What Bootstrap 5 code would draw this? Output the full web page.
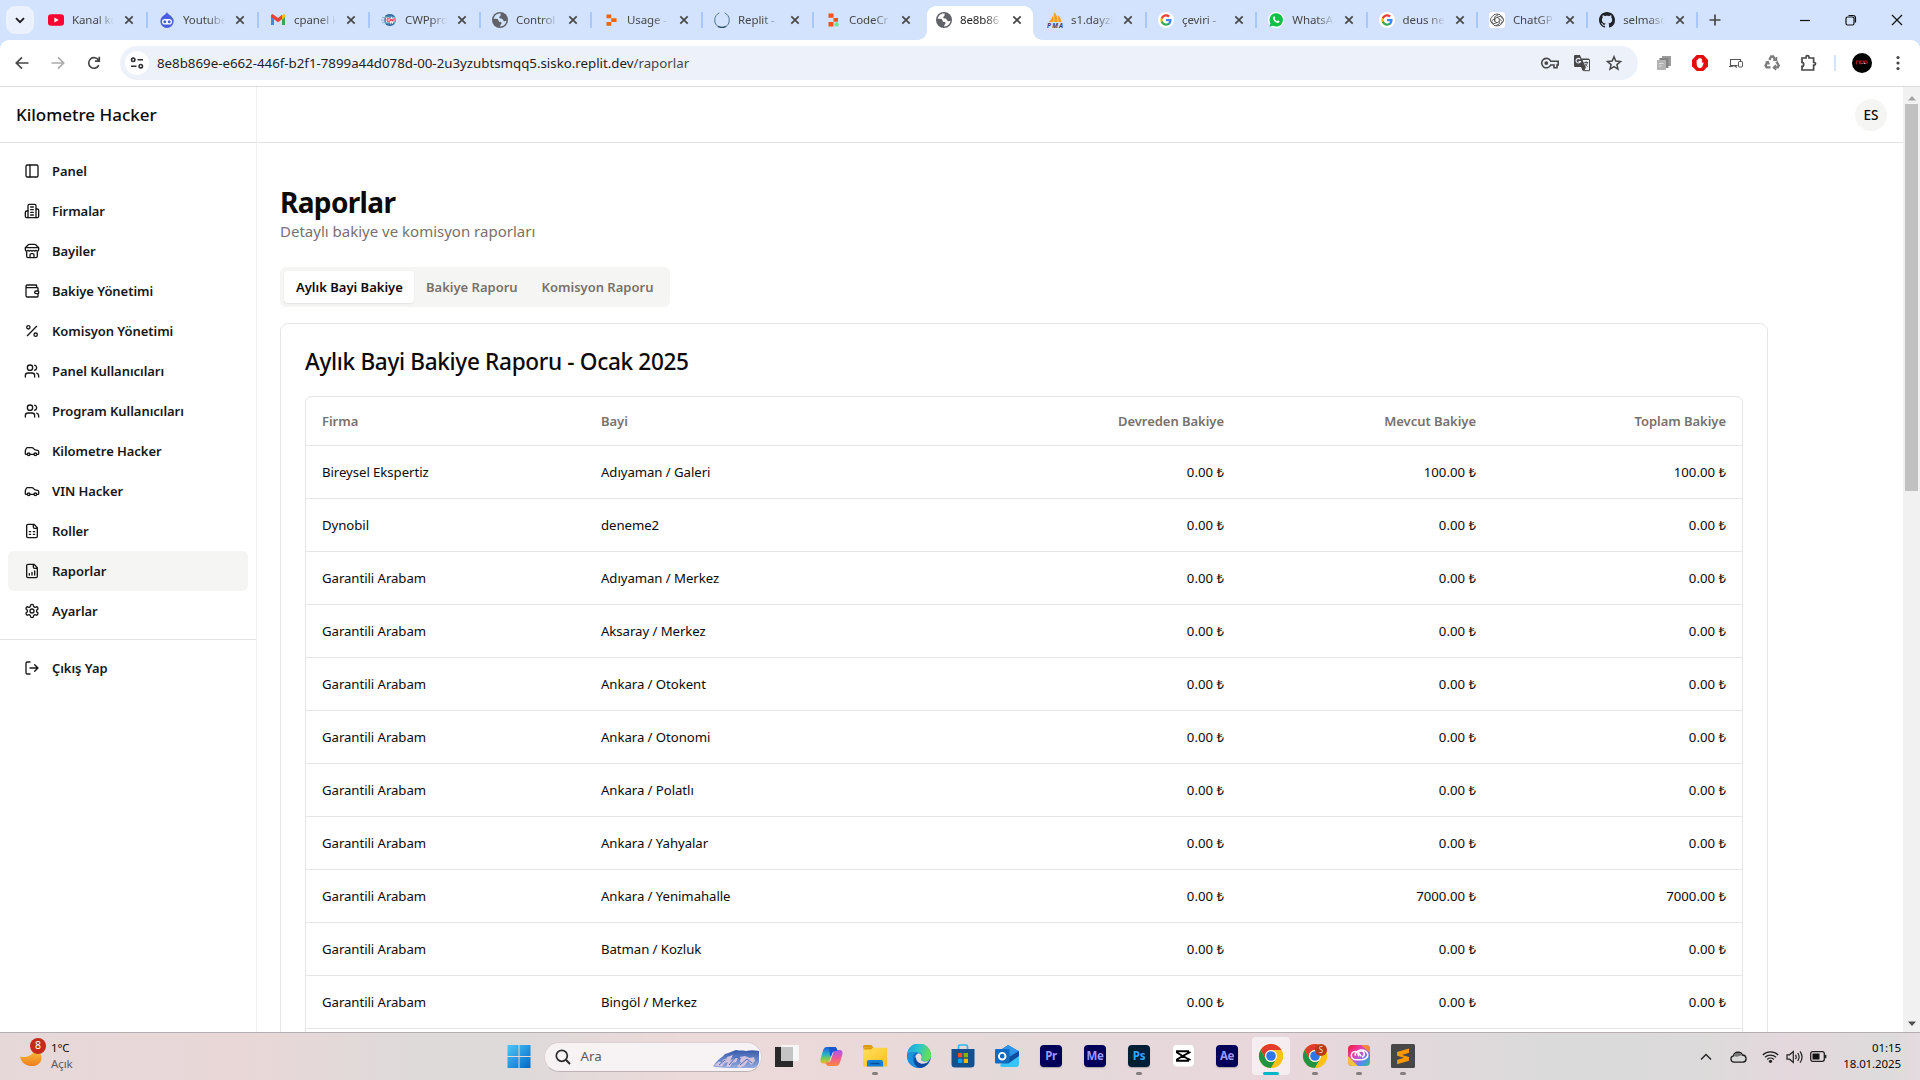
<!DOCTYPE html>
<html lang="tr">
<head>
<meta charset="utf-8">
<meta name="viewport" content="width=device-width, initial-scale=1">
<title>Kilometre Hacker - Raporlar</title>
<link href="https://cdn.jsdelivr.net/npm/bootstrap@5.3.0/dist/css/bootstrap.min.css" rel="stylesheet">
<style>
  body{font-family:"Noto Sans","Open Sans",sans-serif;font-size:14px;color:#0c0a09;background:#fff}
  svg{display:block;flex:none}
  .screen{width:1920px;height:1080px}
  /* browser tab strip */
  .strip{height:40px;background:#d3e3fd;flex:none;padding-left:6px}
  .tab-search{width:28px;height:28px;border-radius:9px;background:#ebf1fd;margin-right:3px}
  .btab{height:28px;width:111px;padding-left:11px;position:relative;font-size:11.5px;letter-spacing:-.1px;color:#474747;flex:none}
  .btab.w{width:110.3px}
  .btab .cap{width:42px;margin-left:8px;white-space:nowrap;overflow:hidden;-webkit-mask-image:linear-gradient(90deg,#000 60%,transparent);mask-image:linear-gradient(90deg,#000 60%,transparent)}
  .btab .fav{width:16px;height:16px;color:#d3e3fd}
  .btab .cls{margin-left:10px}
  .btab::after{content:"";position:absolute;right:0;top:6px;height:16px;width:2px;background:#a8c7fa}
  .btab.last-before::after,.btab.current::after{display:none}
  .btab.current{color:#1f1f1f;height:34px;margin-top:6px;align-self:flex-start;padding-bottom:6px;z-index:1}
  .btab.current .fav{color:#fff}
  .btab.current::before{content:"";position:absolute;z-index:-1;left:2px;right:3px;top:0;bottom:0;background:#fff;border-radius:9px 9px 0 0}
  .foot{position:absolute;bottom:0;width:9px;height:9px}
  .foot.l{left:-7px;background:radial-gradient(circle at 0 0,transparent 8.5px,#fff 9px)}
  .foot.r{right:-6px;background:radial-gradient(circle at 100% 0,transparent 8.5px,#fff 9px)}
  .plus{margin-left:11px}
  /* toolbar */
  .tools-wrap{background:#d3e3fd;flex:none}
  .tools{height:47px;background:#fff;border-radius:9px 9px 0 0;border-bottom:1px solid #dcdcdc;padding:6px 0 6px 4px}
  .tbtn{width:36px;height:34px}
  .omni{width:1518px;height:34px;border-radius:17px;background:#edf1fa;margin-left:8px;padding:0 12px 0 5px}
  .site{width:24px;height:24px;border-radius:50%;background:#fff}
  .url{font-size:13.3px;letter-spacing:-.01px;margin-left:8px;padding-top:1px;color:#1f1f1f}
  .url span{color:#474747}
  .ext{width:36px}
  /* app */
  .view{height:945px;overflow:hidden;flex:none}
  .side{width:257px;border-right:1px solid #f0f0ef;flex:none}
  .bar{height:56px;border-bottom:1px solid #e2e2e1;flex:none}
  .brand{font-size:17px;font-weight:500;letter-spacing:-.02px;padding:1px 0 0 16px}
  .side .nav{padding:8px}
  .side .nav-link{height:40px;padding:0 16px;gap:12px;color:#171717;font-weight:600;font-size:13px;letter-spacing:-.05px;border-radius:6px;width:240px}
  .side .nav-link span{padding-top:2px}
  .side .nav-link svg{fill:none;stroke:currentColor;stroke-width:2;stroke-linecap:round;stroke-linejoin:round}
  .side .nav-link.active{background:#f5f5f4}
  .side .split{border-top:1px solid #e2e2e1}
  .avatar{width:32px;height:32px;border-radius:50%;background:#f5f5f4;font-size:13.5px;font-weight:500;margin-right:16px;padding-top:1px}
  .page-body{width:1488px;margin-left:23px;padding-top:41px}
  .page-body h1{font-size:28px;font-weight:700;letter-spacing:-.65px;line-height:36px;margin:0}
  .sub{font-size:15px;letter-spacing:0;line-height:24px;color:#78716c;margin:-1px 0 24px}
  .seg{background:#f5f5f4;border-radius:6px;padding:4px;height:40px;display:inline-flex}
  .seg button{border:0;background:transparent;height:32px;padding:2px 12px 0;font-size:13px;font-weight:600;color:#78716c;border-radius:4px;width:130px;white-space:nowrap}
  .seg button.active{background:#fff;color:#0c0a09;box-shadow:0 1px 2px rgba(0,0,0,.07)}
  .seg button:nth-child(2){width:115px}.seg button:nth-child(3){width:137px}
  .panel{border:1px solid #e5e5e4;border-radius:8px;padding:24px;margin-top:16px;height:900px}
  .panel h2{font-size:22.6px;font-weight:500;letter-spacing:-.34px;line-height:28px;margin:0 0 20px}
  .frame{border:1px solid #e5e5e4;border-radius:6px}
  .frame table{margin:0;table-layout:fixed;width:100%;--bs-table-bg:transparent}
  .frame th,.frame td{border-bottom:1px solid #e5e5e4;padding:2px 16px 0!important;vertical-align:middle;white-space:nowrap}
  .frame th{height:48px;color:#78716c;font-weight:600;font-size:13px;letter-spacing:-.04px}
  .frame td{height:53px;padding-top:3px!important;font-size:13.2px;letter-spacing:-.06px;color:#0c0a09}
  .frame td.text-end{letter-spacing:0}
  .sbar{width:17px;background:#f1f1f1;flex:none;padding:5px 0 6px}
  .thumb{width:13px;height:387px;background:#c1c1c1;margin-top:3px}
  /* taskbar */
  .task{height:48px;border-top:1px solid #b5aeb0;background:linear-gradient(90deg,#e6d8d9 0,#e9d7d7 240px,#dedada 420px,#dfdada 530px,#ecd9d9 680px,#ebd9d9 860px,#e4d9d9 1000px,#e8d7dc 1280px,#dadada 1560px,#dcdada 1700px,#e4d8dd 1790px,#dddbdb 1890px,#e5dadf 1920px);flex:none}
  .weather{width:506.5px;padding-left:20px}
  .count{position:absolute;left:10px;top:-1px;width:16px;height:16px;border-radius:50%;background:#c42b1c;color:#fff;font-size:10.5px}
  .clk{font-size:11.5px;letter-spacing:-.1px;line-height:16px;padding-bottom:2px}
  .find{width:218px;height:30px;border-radius:15px;background:#f7f3f4;border:1px solid #ddd0d1;border-bottom-color:#bdb2b3;margin:0 3.5px 0 13px;padding:0 1px 0 10px;overflow:hidden;color:#5c5858;font-size:13.3px}
  .app{width:44px;height:46px;position:relative;margin-bottom:1px}
  .app::after{content:"";position:absolute;bottom:4px;left:19px;width:6px;height:3px;border-radius:2px;background:transparent}
  .app.run::after{background:#857d7f}
  .app.on::before{content:"";position:absolute;left:3px;top:4px;width:38px;height:38px;border-radius:4px;background:#f5edf0}
  .app.on::after{background:#00b7c3;width:16px;left:14px}
  .app svg,.app .sq{position:relative}
  .sq{width:22px;height:22px;border-radius:4px;background:#00005b;color:#9999ff;font-size:11.5px;font-weight:700;letter-spacing:-.3px;box-shadow:0 1px 1px rgba(0,0,0,.25)}
  .sq.ps{background:#001e36;color:#31a8ff}
</style>
<script src="https://cdn.jsdelivr.net/npm/bootstrap@5.3.0/dist/js/bootstrap.bundle.min.js"></script>
</head>
<body class="overflow-hidden">
<svg width="0" height="0" class="position-absolute">
  <defs>
    <symbol id="x" viewBox="0 0 10 10"><path d="M1.3 1.3l7.4 7.4M8.7 1.3L1.3 8.7" stroke="#474747" stroke-width="1.7" fill="none"/></symbol>
    <symbol id="globe" viewBox="0 0 16 16"><circle cx="8" cy="8" r="8" fill="#5f6368"/><path d="M8.600 1.600C5 1.300 2.200 3.600 1.700 6.800c1.400-.2 3.600-.2 4.400.6.700.8.2 2 1.200 2.400 1 .3 2.400.2 2.300 1.400-.1 1.100-1.400 1.200-1.500 3.200 3.300.1 6-2.300 6.300-5.600-.9.500-2 .600-2.800.1-.9-.6-.5-1.700-1.500-2.100-1.100-.4-2.500.1-2.800-1-.3-1.500 1.900-1.300 1.300-4.200z" fill="currentColor"/></symbol>
    <symbol id="goog" viewBox="0 0 24 24"><circle cx="12" cy="12" r="12" fill="#fff"/><g transform="translate(2.6 2.6) scale(.785)"><path fill="#4285f4" d="M22.600 12.200c0-.8-.1-1.500-.2-2.200H12v4.300h5.900c-.3 1.400-1 2.500-2.200 3.300v2.800h3.600c2.100-1.900 3.300-4.700 3.300-8.200z"/><path fill="#34a853" d="M12 23c3 0 5.500-1 7.300-2.700l-3.600-2.800c-1 .7-2.300 1.100-3.700 1.100-2.900 0-5.300-1.900-6.200-4.500H2.200v2.800C4 20.500 7.700 23 12 23z"/><path fill="#fbbc05" d="M5.800 14.100c-.2-.7-.3-1.400-.3-2.100s.1-1.400.3-2.100V7.100H2.200a11 11 0 0 0 0 9.800z"/><path fill="#ea4335" d="M12 5.400c1.600 0 3.100.6 4.200 1.600l3.200-3.200C17.500 2.100 15 1 12 1 7.700 1 4 3.500 2.200 7.100l3.600 2.800C6.700 7.300 9.100 5.400 12 5.400z"/></g></symbol>
    <symbol id="chrome" viewBox="0 0 24 24"><circle cx="12" cy="12" r="12" fill="#fbc116"/><path d="M1.600 6A12 12 0 0 1 22.400 6H12a6 6 0 0 0-5.300 8.800z" fill="#e33b2e"/><path d="M1.600 6a12 12 0 0 0 10.400 18l5.200-9a6 6 0 0 1-10.400 0z" fill="#229342"/><path d="M12 6h10.400a12 12 0 0 1-10.400 18l5.200-9A6 6 0 0 0 12 6z" fill="#fbc116"/><circle cx="12" cy="12" r="6" fill="#fff"/><circle cx="12" cy="12" r="4.800" fill="#2f76ea"/></symbol>
    <symbol id="i-panel" viewBox="0 0 24 24"><rect x="3" y="3" width="18" height="18" rx="2"/><path d="M9 3v18"/></symbol>
    <symbol id="i-building" viewBox="0 0 24 24"><path d="M6 22V4a2 2 0 0 1 2-2h8a2 2 0 0 1 2 2v18Z"/><path d="M6 12H4a2 2 0 0 0-2 2v6a2 2 0 0 0 2 2h2M18 9h2a2 2 0 0 1 2 2v9a2 2 0 0 1-2 2h-2M10 6h4M10 10h4M10 14h4M10 18h4"/></symbol>
    <symbol id="i-store" viewBox="0 0 24 24"><path d="m2 7 4.410-4.410A2 2 0 0 1 7.830 2h8.340a2 2 0 0 1 1.420.590L22 7M4 12v8a2 2 0 0 0 2 2h12a2 2 0 0 0 2-2v-8M15 22v-4a2 2 0 0 0-2-2h-2a2 2 0 0 0-2 2v4M2 7h20M22 7v3a2 2 0 0 1-2 2 2.700 2.700 0 0 1-1.590-.630.700.700 0 0 0-.820 0A2.700 2.700 0 0 1 16 12a2.700 2.700 0 0 1-1.590-.630.700.700 0 0 0-.820 0A2.700 2.700 0 0 1 12 12a2.700 2.700 0 0 1-1.590-.630.700.700 0 0 0-.820 0A2.700 2.700 0 0 1 8 12a2.700 2.700 0 0 1-1.590-.630.700.700 0 0 0-.820 0A2.700 2.700 0 0 1 4 12a2 2 0 0 1-2-2V7"/></symbol>
    <symbol id="i-wallet" viewBox="0 0 24 24"><path d="M19 7V4a1 1 0 0 0-1-1H5a2 2 0 0 0 0 4h15a1 1 0 0 1 1 1v4h-3a2 2 0 0 0 0 4h3a1 1 0 0 0 1-1v-2a1 1 0 0 0-1-1M3 5v14a2 2 0 0 0 2 2h15a1 1 0 0 0 1-1v-4"/></symbol>
    <symbol id="i-percent" viewBox="0 0 24 24"><path d="M19 5 5 19"/><circle cx="6.500" cy="6.500" r="2.500"/><circle cx="17.500" cy="17.500" r="2.500"/></symbol>
    <symbol id="i-users" viewBox="0 0 24 24"><path d="M16 21v-2a4 4 0 0 0-4-4H6a4 4 0 0 0-4 4v2M22 21v-2a4 4 0 0 0-3-3.870M16 3.130a4 4 0 0 1 0 7.750"/><circle cx="9" cy="7" r="4"/></symbol>
    <symbol id="i-car" viewBox="0 0 24 24"><path d="M19 17h2c.6 0 1-.4 1-1v-3c0-.9-.7-1.700-1.500-1.900C18.700 10.600 16 10 16 10s-1.300-1.400-2.200-2.300c-.5-.4-1.100-.7-1.800-.7H5c-.6 0-1.100.4-1.400.9l-1.400 2.900A3.700 3.700 0 0 0 2 12v4c0 .6.4 1 1 1h2M9 17h6"/><circle cx="7" cy="17" r="2"/><circle cx="17" cy="17" r="2"/></symbol>
    <symbol id="i-sheet" viewBox="0 0 24 24"><path d="M15 2H6a2 2 0 0 0-2 2v16a2 2 0 0 0 2 2h12a2 2 0 0 0 2-2V7ZM14 2v4a2 2 0 0 0 2 2h4M8 13h2M14 13h2M8 17h2M14 17h2"/></symbol>
    <symbol id="i-chart" viewBox="0 0 24 24"><path d="M15 2H6a2 2 0 0 0-2 2v16a2 2 0 0 0 2 2h12a2 2 0 0 0 2-2V7ZM14 2v4a2 2 0 0 0 2 2h4M8 18v-2M12 18v-4M16 18v-6"/></symbol>
    <symbol id="i-gear" viewBox="0 0 24 24"><path d="M12.220 2h-.440a2 2 0 0 0-2 2v.180a2 2 0 0 1-1 1.730l-.430.250a2 2 0 0 1-2 0l-.150-.080a2 2 0 0 0-2.730.730l-.220.380a2 2 0 0 0 .730 2.730l.150.100a2 2 0 0 1 1 1.720v.510a2 2 0 0 1-1 1.740l-.150.090a2 2 0 0 0-.730 2.730l.220.380a2 2 0 0 0 2.730.730l.150-.080a2 2 0 0 1 2 0l.430.250a2 2 0 0 1 1 1.730V20a2 2 0 0 0 2 2h.440a2 2 0 0 0 2-2v-.180a2 2 0 0 1 1-1.730l.430-.250a2 2 0 0 1 2 0l.150.080a2 2 0 0 0 2.730-.730l.220-.390a2 2 0 0 0-.730-2.730l-.150-.080a2 2 0 0 1-1-1.740v-.500a2 2 0 0 1 1-1.740l.150-.090a2 2 0 0 0 .730-2.730l-.220-.380a2 2 0 0 0-2.730-.730l-.150.080a2 2 0 0 1-2 0l-.430-.250a2 2 0 0 1-1-1.730V4a2 2 0 0 0-2-2z"/><circle cx="12" cy="12" r="3"/></symbol>
    <symbol id="i-out" viewBox="0 0 24 24"><path d="M9 21H5a2 2 0 0 1-2-2V5a2 2 0 0 1 2-2h4M16 17l5-5-5-5M21 12H9"/></symbol>
    <linearGradient id="gw" x1="0" y1="0" x2="1" y2="1"><stop offset="0" stop-color="#4cc8fb"/><stop offset="1" stop-color="#0067c5"/></linearGradient>
    <linearGradient id="gm" x1="0" y1="0" x2="0" y2="1"><stop offset="0" stop-color="#f7c23c"/><stop offset="1" stop-color="#ee7d1c"/></linearGradient>
    <linearGradient id="gf" x1="0" y1="0" x2="1" y2="1"><stop offset="0" stop-color="#ffdf5c"/><stop offset="1" stop-color="#fcbf22"/></linearGradient>
    <linearGradient id="ge" x1="0" y1="0" x2="1" y2=".3"><stop offset="0" stop-color="#1b9de2"/><stop offset=".5" stop-color="#2bc3d2"/><stop offset="1" stop-color="#63de55"/></linearGradient>
    <linearGradient id="gc1" x1="0" y1="0" x2="0" y2="1"><stop offset="0" stop-color="#1b5fd8"/><stop offset=".45" stop-color="#2bb1c9"/><stop offset=".75" stop-color="#8ccb4a"/><stop offset="1" stop-color="#f3b431"/></linearGradient>
    <linearGradient id="gc2" x1="0" y1="0" x2="0" y2="1"><stop offset="0" stop-color="#a45bf0"/><stop offset=".5" stop-color="#ee5a96"/><stop offset="1" stop-color="#fb8a3c"/></linearGradient>
    <linearGradient id="gcc" x1="0" y1="0" x2="1" y2="1"><stop offset="0" stop-color="#e8202f"/><stop offset=".3" stop-color="#f0379b"/><stop offset=".55" stop-color="#b85bd4"/><stop offset=".75" stop-color="#4d8ef0"/><stop offset="1" stop-color="#2fc97b"/></linearGradient>
    <linearGradient id="gh" x1="0" y1="0" x2="0" y2="1"><stop offset="0" stop-color="#3559ac"/><stop offset="1" stop-color="#93aade"/></linearGradient>
  </defs>
</svg>

<div class="screen d-flex flex-column">
  <!-- tab strip -->
  <div class="strip d-flex align-items-center">
    <div class="tab-search d-flex align-items-center justify-content-center"><svg width="10" height="7" viewBox="0 0 10 7"><path d="M1 1.200l4 4 4-4" stroke="#1f1f1f" stroke-width="1.900" fill="none"/></svg></div>
    <div class="btab d-flex align-items-center"><svg class="fav" viewBox="0 0 16 16"><rect y="2.300" width="16" height="11.400" rx="3" fill="#ff0033"/><path d="M6.400 5.500v5L10.700 8z" fill="#fff"/></svg><div class="cap">Kanal ko</div><svg class="cls" width="10" height="10"><use href="#x"/></svg></div>
    <div class="btab d-flex align-items-center"><svg class="fav" viewBox="0 0 16 16"><path d="M8 0c.6 2 2.200 2.400 4.200 4.200A6.700 6.700 0 0 1 14.600 9.300C14.600 13 11.600 16 8 16S1.400 13 1.400 9.300c0-2 .9-3.800 2.400-5.100C5.400 2.700 7.400 2 8 0z" fill="#4a5ee0"/><rect x="3" y="7" width="10" height="5.600" rx="2.800" fill="#fff"/><circle cx="5.800" cy="9.800" r="1.500" fill="#4a5ee0"/><circle cx="10.200" cy="9.800" r="1.500" fill="#4a5ee0"/></svg><div class="cap">Youtube</div><svg class="cls" width="10" height="10"><use href="#x"/></svg></div>
    <div class="btab d-flex align-items-center"><svg class="fav" viewBox="0 0 16 16"><path d="M1 3.500v9.500h3V7.200z" fill="#4285f4"/><path d="M15 3.500v9.500h-3V7.200z" fill="#34a853"/><path d="M12 3.600v4L15.500 5V3.800c0-1.400-1.600-2-2.700-1.200z" fill="#fbbc04"/><path d="M1 3.800C1 2.300 2.600 1.900 3.600 2.700L8 6l4-3.200v4.500L8 10.300 3.600 7 1 5z" fill="#ea4335"/></svg><div class="cap">cpanel k</div><svg class="cls" width="10" height="10"><use href="#x"/></svg></div>
    <div class="btab d-flex align-items-center"><svg class="fav" viewBox="0 0 16 16"><circle cx="9" cy="8" r="6" fill="#4f87b8"/><path d="M1 5.500h13M0 8.200h15M1 10.700h13" stroke="#7fa7d0" stroke-width=".8"/><path d="M4.500 3.800c3-1.600 7-1.300 9 .8M5 12.200c3 1.600 6 1.300 8-.6" stroke="#285d94" fill="none"/><path d="M8 6.800H6v2.400h2M9 6.500l.8 2.700.8-2 .8 2 .8-2.700M13 9.500V6.800h1.600" stroke="#fff" stroke-width="2" fill="none"/><path d="M8 6.800H6v2.400h2M9 6.500l.8 2.700.8-2 .8 2 .8-2.700M13 9.500V6.800h1.600" stroke="#d43b45" stroke-width="1" fill="none"/></svg><div class="cap">CWPpro</div><svg class="cls" width="10" height="10"><use href="#x"/></svg></div>
    <div class="btab d-flex align-items-center"><svg class="fav"><use href="#globe"/></svg><div class="cap">Control</div><svg class="cls" width="10" height="10"><use href="#x"/></svg></div>
    <div class="btab d-flex align-items-center"><svg class="fav" viewBox="0 0 16 16"><path d="M3.500 2.500h4.700v3.800H3.500zM8.200 6.300h5.300v3.600H8.200zM3.500 9.900h4.700v3.800H3.500z" fill="#f26207"/></svg><div class="cap">Usage -</div><svg class="cls" width="10" height="10"><use href="#x"/></svg></div>
    <div class="btab d-flex align-items-center"><svg class="fav" viewBox="0 0 16 16"><path d="M5.300.9A8 8 0 0 0 4.700 15M10.700.9A8 8 0 0 1 11.300 15" stroke="#51718f" stroke-width="1" fill="none"/><path d="M4.200 14.400Q8 16.500 11.800 14.400" stroke="#2f5069" stroke-width="1.500" fill="none"/></svg><div class="cap">Replit -</div><svg class="cls" width="10" height="10"><use href="#x"/></svg></div>
    <div class="btab last-before d-flex align-items-center"><svg class="fav" viewBox="0 0 16 16"><path d="M3.500 1.500h5v4.300h-5zM8.500 6h4.500v3.700H8.500zM3.500 10h5v4.500h-5z" fill="#f2541b"/><circle cx="11.600" cy="12.400" r="2.200" fill="#6de58a"/></svg><div class="cap">CodeCr</div><svg class="cls" width="10" height="10"><use href="#x"/></svg></div>
    <div class="btab current d-flex align-items-center"><i class="foot l"></i><i class="foot r"></i><svg class="fav"><use href="#globe"/></svg><div class="cap">8e8b86</div><svg class="cls" width="10" height="10"><use href="#x"/></svg></div>
    <div class="btab d-flex align-items-center"><svg class="fav" viewBox="0 0 16 16"><path d="M6.500 1v9H1.800C4 8 6 5 6.500 1zM7.200 0c2.300 2.200 3.600 5.800 3.500 10H7.200zM11 3c2 2 3.200 4.500 3.400 7h-3z" fill="#f89c1c"/><text x="0" y="15.800" font-size="6.500" font-weight="700" font-style="italic" fill="#3b3f6e" textLength="16">PMA</text></svg><div class="cap">s1.dayzi</div><svg class="cls" width="10" height="10"><use href="#x"/></svg></div>
    <div class="btab w d-flex align-items-center"><svg class="fav"><use href="#goog"/></svg><div class="cap">çeviri -</div><svg class="cls" width="10" height="10"><use href="#x"/></svg></div>
    <div class="btab w d-flex align-items-center"><svg class="fav" viewBox="0 0 16 16"><circle cx="8" cy="8" r="8" fill="#fff"/><path d="M1.500 14.600l.9-3.400a6.700 6.700 0 1 1 2.500 2.500z" fill="#0fc144"/><path d="M5.600 4.600c.5-.5 1-.3 1.200.3l.4 1c.1.300-.6.900-.5 1.100.5 1 1.300 1.700 2.300 2.100.3.100.8-.8 1.100-.7l1.300.7c.3.300 0 1.400-.7 1.700-1.500.6-3.600-.7-4.800-2.300C4.700 7 4.500 5.600 5.600 4.600z" fill="#fff"/></svg><div class="cap">WhatsA</div><svg class="cls" width="10" height="10"><use href="#x"/></svg></div>
    <div class="btab w d-flex align-items-center"><svg class="fav"><use href="#goog"/></svg><div class="cap">deus ne</div><svg class="cls" width="10" height="10"><use href="#x"/></svg></div>
    <div class="btab w d-flex align-items-center"><svg class="fav" viewBox="0 0 16 16"><rect width="16" height="16" rx="3" fill="#fff"/><g fill="none" stroke="#3c3c3c" stroke-width=".8"><path d="M8 2a6 6 0 0 1 5.200 3 4 4 0 0 1 0 6A6 6 0 0 1 8 14a6 6 0 0 1-5.200-3 4 4 0 0 1 0-6A6 6 0 0 1 8 2z"/><path d="M8 5.300l2.300 1.400v2.700L8 10.700 5.700 9.400V6.700zM5.700 9.400V4.800L9.500 2.600M8 5.300l4-1.200 1.500 3M10.300 6.700l3 3-1.600 2.500M10.300 9.400v2.600L6.500 13.700M8 10.700l-4 1.200-1.500-3M5.700 6.700l-2.900 2"/></g></svg><div class="cap">ChatGP</div><svg class="cls" width="10" height="10"><use href="#x"/></svg></div>
    <div class="btab w d-flex align-items-center"><svg class="fav" viewBox="0 0 16 16"><path d="M8 0C3.580 0 0 3.580 0 8c0 3.540 2.290 6.530 5.470 7.590.4.070.55-.17.55-.38 0-.19-.01-.82-.01-1.490-2.010.37-2.530-.49-2.690-.94-.09-.23-.48-.94-.82-1.130-.28-.15-.68-.52-.01-.53.63-.01 1.080.58 1.230.82.72 1.210 1.870.87 2.330.66.07-.52.28-.87.51-1.070-1.780-.2-3.640-.89-3.640-3.950 0-.87.31-1.590.82-2.150-.08-.2-.36-1.020.08-2.120 0 0 .67-.21 2.200.82.64-.18 1.320-.27 2-.27s1.360.09 2 .27c1.530-1.040 2.200-.82 2.200-.82.44 1.100.16 1.920.08 2.120.51.56.82 1.270.82 2.150 0 3.070-1.870 3.750-3.650 3.950.29.25.54.73.54 1.480 0 1.070-.01 1.930-.01 2.200 0 .21.15.46.55.38A8.010 8.010 0 0 0 16 8c0-4.420-3.580-8-8-8z" fill="#1f2328"/></svg><div class="cap">selmaso</div><svg class="cls" width="10" height="10"><use href="#x"/></svg></div>
    <svg class="plus" width="12" height="12" viewBox="0 0 12 12"><path d="M6 .5v11M.5 6h11" stroke="#474747" stroke-width="1.700"/></svg>
    <div class="d-flex align-items-center ms-auto">
      <svg width="46" height="40" viewBox="0 0 46 40"><path d="M18 20.500h10" stroke="#111" stroke-width="1.200"/></svg>
      <svg width="46" height="40" viewBox="0 0 46 40"><g fill="none" stroke="#111" stroke-width="1.200"><rect x="18" y="17" width="8" height="8" rx="1.500"/><path d="M20.500 15.500h4.500a2.500 2.500 0 0 1 2.500 2.500v4.500"/></g></svg>
      <svg width="46" height="40" viewBox="0 0 46 40"><path d="M18 15l10 10M28 15L18 25" stroke="#111" stroke-width="1.200"/></svg>
    </div>
  </div>

  <!-- toolbar -->
  <div class="tools-wrap"><div class="tools d-flex align-items-center">
    <div class="tbtn d-flex align-items-center justify-content-center"><svg width="14" height="14" viewBox="0 0 14 14"><path d="M13.500 7H1.500M7 1.300L1.300 7 7 12.700" fill="none" stroke="#474747" stroke-width="1.700"/></svg></div>
    <div class="tbtn d-flex align-items-center justify-content-center"><svg width="14" height="14" viewBox="0 0 14 14"><path d="M.5 7h12M7 1.300L12.700 7 7 12.700" fill="none" stroke="#ababab" stroke-width="1.700"/></svg></div>
    <div class="tbtn d-flex align-items-center justify-content-center"><svg width="14" height="14" viewBox="0 0 14 14"><path d="M11.800 9.200A5.300 5.300 0 1 1 11.700 4.500M12.300.8v4.400H8" fill="none" stroke="#474747" stroke-width="1.700"/></svg></div>
    <div class="omni d-flex align-items-center">
      <div class="site d-flex align-items-center justify-content-center"><svg width="14" height="12" viewBox="0 0 14 12"><g fill="none" stroke="#303134" stroke-width="1.600"><circle cx="3.200" cy="2.800" r="1.700"/><path d="M7.500 2.800H13M1 9.200h5.500"/><circle cx="10.800" cy="9.200" r="1.700"/></g></svg></div>
      <div class="url text-nowrap">8e8b869e-e662-446f-b2f1-7899a44d078d-00-2u3yzubtsmqq5.sisko.replit.dev<span>/raporlar</span></div>
      <div class="d-flex align-items-center ms-auto">
        <svg width="32" height="20" viewBox="-7 -4 32 20"><g fill="none" stroke="#474747" stroke-width="1.600"><path d="M9.700 4.200A4.700 4.700 0 1 0 9.700 8H13v2.700h3V8h1.200V4.200z"/></g><circle cx="5.300" cy="6.100" r="1.900" fill="#474747"/></svg>
        <svg width="32" height="20" viewBox="-8 -2 32 20"><path d="M1 0h5l1.500 3.500H14.800V15.500H8.500L7 12H1a1 1 0 0 1-1-1V1a1 1 0 0 1 1-1z" fill="#474747"/><path d="M7.800 4.500H15.500v11.200H9.600l1.800-3z" fill="#edf1fa" stroke="#474747"/><path d="M6.200 4.300A2.300 2.300 0 1 0 6.500 6.500H4.500" stroke="#edf1fa" fill="none" stroke-width="1.100"/><path d="M10.200 7.500h4M12.200 6.500v1M13.500 7.500c-.5 2-1.500 3-2.500 4M11 8.500c.6 1.600 1.500 2.400 2.600 3" stroke="#474747" stroke-width=".9" fill="none"/></svg>
        <svg class="ms-1" width="24" height="20" viewBox="-4 -2 24 20"><path d="M8 1.800l1.800 4.300 4.700.4-3.600 3.100 1.100 4.500L8 11.700 4 14.100l1.100-4.500L1.500 6.500l4.700-.4z" fill="none" stroke="#474747" stroke-width="1.500"/></svg>
      </div>
    </div>
    <div class="d-flex align-items-center ms-2">
      <svg class="ext" height="20" viewBox="-10 -2 36 20"><rect x="6" y="1" width="9" height="10" fill="#9b9b9b"/><rect x="3.500" y="3" width="9" height="10" fill="#858585"/><rect x="1" y="5" width="9" height="10" fill="#b4b4b4"/><path d="M3 8.500h4.500M3 11h3" stroke="#ddd"/></svg>
      <svg class="ext" height="20" viewBox="-10 -2 36 20"><path d="M4.700 0h6.600L16 4.700v6.600L11.300 16H4.700L0 11.300V4.700z" fill="#e40d0d"/><path d="M4.600 8V5.200q.7-.7 1.300 0V4q.7-.8 1.400 0v-.8q.7-.8 1.400 0V4q.7-.8 1.400 0v4l.8-.8q.9 0 .6 1-.7 4.800-3.600 4.800-3.300 0-3.300-5z" fill="#fff"/></svg>
      <svg class="ext" height="20" viewBox="-10 -2 36 20"><g fill="none" stroke="#555"><path d="M9.500 10.500H2.500V4.500h10v1.500M1 11.500h3l2-1 3 2" stroke-width="1.100"/><rect x="10.500" y="6.500" width="4" height="5.500" rx=".7"/></g></svg>
      <svg class="ext" height="20" viewBox="-10 -2 36 20"><g fill="none" stroke="#7b7b7b" stroke-width="2.400"><path d="M5.300 4.800L7.200 1.500h2l2 3.300M12.500 6.700l2.200 3.800-1 1.900H9.800M6.500 12.400H2.600l-1-1.900L3.700 7"/><path d="M12.500 2v3.300H9.200M12 10l-2.500 2.400L12 15M1.500 7.500l2.700-.8 1 2.800" stroke-width="1.600"/></g></svg>
      <svg class="ext" height="20" viewBox="-10.500 -2 36 20"><path d="M1.500 3H5.500V2.200a1.500 1.500 0 0 1 3 0V3h4.600v4.500h.7a1.300 1.300 0 0 1 0 2.600h-.7V15H1.500v-3.600c2.200 0 2.200-4 0-4z" fill="none" stroke="#474747" stroke-width="1.700"/></svg>
      <div class="ms-2" style="width:2px;height:16px;background:#d3e3fd"></div>
      <svg class="ms-3" width="20" height="20" viewBox="0 0 20 20"><circle cx="10" cy="10" r="10" fill="#000"/><path d="M4.500 11.500V8h3v3M8.500 11.500V8h3v3M12.500 11V8H15v3" stroke="#9e1620" fill="none" stroke-width="1.200"/><path d="M9.500 10.500h1M12 10.500h1.500" stroke="#bbb"/></svg>
      <svg class="ms-4" width="4" height="16" viewBox="0 0 4 16"><g fill="#474747"><circle cx="2" cy="2.500" r="1.600"/><circle cx="2" cy="8" r="1.600"/><circle cx="2" cy="13.500" r="1.600"/></g></svg>
    </div>
  </div></div>

  <!-- application -->
  <div class="view d-flex">
    <aside class="side">
      <div class="bar brand d-flex align-items-center">Kilometre Hacker</div>
      <nav class="nav flex-column flex-nowrap">
        <a class="nav-link d-flex align-items-center"><svg width="16" height="16"><use href="#i-panel"/></svg><span>Panel</span></a>
        <a class="nav-link d-flex align-items-center"><svg width="16" height="16"><use href="#i-building"/></svg><span>Firmalar</span></a>
        <a class="nav-link d-flex align-items-center"><svg width="16" height="16"><use href="#i-store"/></svg><span>Bayiler</span></a>
        <a class="nav-link d-flex align-items-center"><svg width="16" height="16"><use href="#i-wallet"/></svg><span>Bakiye Yönetimi</span></a>
        <a class="nav-link d-flex align-items-center"><svg width="16" height="16"><use href="#i-percent"/></svg><span>Komisyon Yönetimi</span></a>
        <a class="nav-link d-flex align-items-center"><svg width="16" height="16"><use href="#i-users"/></svg><span>Panel Kullanıcıları</span></a>
        <a class="nav-link d-flex align-items-center"><svg width="16" height="16"><use href="#i-users"/></svg><span>Program Kullanıcıları</span></a>
        <a class="nav-link d-flex align-items-center"><svg width="16" height="16"><use href="#i-car"/></svg><span>Kilometre Hacker</span></a>
        <a class="nav-link d-flex align-items-center"><svg width="16" height="16"><use href="#i-car"/></svg><span>VIN Hacker</span></a>
        <a class="nav-link d-flex align-items-center"><svg width="16" height="16"><use href="#i-sheet"/></svg><span>Roller</span></a>
        <a class="nav-link active d-flex align-items-center"><svg width="16" height="16"><use href="#i-chart"/></svg><span>Raporlar</span></a>
        <a class="nav-link d-flex align-items-center"><svg width="16" height="16"><use href="#i-gear"/></svg><span>Ayarlar</span></a>
      </nav>
      <div class="split nav flex-column">
        <a class="nav-link d-flex align-items-center"><svg width="16" height="16"><use href="#i-out"/></svg><span>Çıkış Yap</span></a>
      </div>
    </aside>

    <main class="flex-grow-1 overflow-hidden">
      <div class="bar d-flex align-items-center justify-content-end"><div class="avatar d-flex align-items-center justify-content-center">ES</div></div>
      <div class="page-body">
        <h1>Raporlar</h1>
        <p class="sub">Detaylı bakiye ve komisyon raporları</p>
        <div class="seg"><button class="active">Aylık Bayi Bakiye</button><button>Bakiye Raporu</button><button>Komisyon Raporu</button></div>
        <section class="panel">
          <h2>Aylık Bayi Bakiye Raporu - Ocak 2025</h2>
          <div class="frame">
            <table class="table">
              <colgroup><col style="width:279px"><col style="width:370px"><col style="width:285px"><col style="width:252px"><col></colgroup>
              <thead><tr><th>Firma</th><th>Bayi</th><th class="text-end">Devreden Bakiye</th><th class="text-end">Mevcut Bakiye</th><th class="text-end">Toplam Bakiye</th></tr></thead>
              <tbody>
                <tr><td>Bireysel Ekspertiz</td><td>Adıyaman / Galeri</td><td class="text-end">0.00 ₺</td><td class="text-end">100.00 ₺</td><td class="text-end">100.00 ₺</td></tr>
                <tr><td>Dynobil</td><td>deneme2</td><td class="text-end">0.00 ₺</td><td class="text-end">0.00 ₺</td><td class="text-end">0.00 ₺</td></tr>
                <tr><td>Garantili Arabam</td><td>Adıyaman / Merkez</td><td class="text-end">0.00 ₺</td><td class="text-end">0.00 ₺</td><td class="text-end">0.00 ₺</td></tr>
                <tr><td>Garantili Arabam</td><td>Aksaray / Merkez</td><td class="text-end">0.00 ₺</td><td class="text-end">0.00 ₺</td><td class="text-end">0.00 ₺</td></tr>
                <tr><td>Garantili Arabam</td><td>Ankara / Otokent</td><td class="text-end">0.00 ₺</td><td class="text-end">0.00 ₺</td><td class="text-end">0.00 ₺</td></tr>
                <tr><td>Garantili Arabam</td><td>Ankara / Otonomi</td><td class="text-end">0.00 ₺</td><td class="text-end">0.00 ₺</td><td class="text-end">0.00 ₺</td></tr>
                <tr><td>Garantili Arabam</td><td>Ankara / Polatlı</td><td class="text-end">0.00 ₺</td><td class="text-end">0.00 ₺</td><td class="text-end">0.00 ₺</td></tr>
                <tr><td>Garantili Arabam</td><td>Ankara / Yahyalar</td><td class="text-end">0.00 ₺</td><td class="text-end">0.00 ₺</td><td class="text-end">0.00 ₺</td></tr>
                <tr><td>Garantili Arabam</td><td>Ankara / Yenimahalle</td><td class="text-end">0.00 ₺</td><td class="text-end">7000.00 ₺</td><td class="text-end">7000.00 ₺</td></tr>
                <tr><td>Garantili Arabam</td><td>Batman / Kozluk</td><td class="text-end">0.00 ₺</td><td class="text-end">0.00 ₺</td><td class="text-end">0.00 ₺</td></tr>
                <tr><td>Garantili Arabam</td><td>Bingöl / Merkez</td><td class="text-end">0.00 ₺</td><td class="text-end">0.00 ₺</td><td class="text-end">0.00 ₺</td></tr>
                <tr><td></td><td></td><td></td><td></td><td></td></tr>
              </tbody>
            </table>
          </div>
        </section>
      </div>
    </main>
    <div class="sbar d-flex flex-column align-items-center">
      <svg width="8" height="5" viewBox="0 0 8 5" class="mt-1"><path d="M0 4.500h8L4 0z" fill="#a3a3a3"/></svg>
      <div class="thumb"></div>
      <svg width="8" height="5" viewBox="0 0 8 5" class="mt-auto"><path d="M0 .5h8L4 5z" fill="#505050"/></svg>
    </div>
  </div>

  <!-- taskbar -->
  <div class="task d-flex align-items-center">
    <div class="weather d-flex align-items-center">
      <div class="position-relative" style="width:31px;height:36px"><svg width="24" height="36" viewBox="0 0 24 36"><path d="M0 18.500c6 1.600 12-.6 15-6.500 4 1 7 5 6.500 8.500C21 25.500 16.500 28.500 11 28 5 27.500 1 24 0 18.500z" fill="url(#gm)" transform="translate(0 -1)"/></svg>
        <span class="count d-flex align-items-center justify-content-center">8</span></div>
      <div class="clk"><div>1°C</div><div style="color:#5f5a5b">Açık</div></div>
    </div>
    <svg width="24" height="23" viewBox="0 0 24 23"><path d="M.500 0h11v11H.500zM12.500 0h11v11h-11zM.500 12h11v11H.500zM12.500 12h11v11h-11z" fill="url(#gw)"/></svg>
    <div class="find d-flex align-items-center">
      <svg width="16" height="16" viewBox="0 0 16 16"><circle cx="6.800" cy="6.800" r="5.500" fill="none" stroke="#2b2b2b" stroke-width="1.700"/><path d="M10.800 10.800L15 15" stroke="#2b2b2b" stroke-width="2"/></svg>
      <span style="margin-left:10px">Ara</span>
      <svg class="ms-auto mt-1" width="48" height="20" viewBox="0 0 48 20"><path d="M1 17c2-2 4-6 9-9l3-3c5-1 7-3 11-4 4 1 6 0 10 1 4-1 8-1 13 0v11q-1 5-5 6H16L3 18z" fill="url(#gh)"/><path d="M2 16.500l5-4 3 1 1-3 3-1-1 4-3 4zM15 8l6-2-3 6 5-3 3 0-2 4-4 1-2 4h-4l2-5-3 1zM28 8l5-1 5 2 4-1 1 4-4 4-3-4-4 5-5 2-2-2 4-3-1-2z" fill="#e3cbe3" opacity=".85"/><path d="M7 16l6-5M17 16l7-8 5 2M28 16l7-6 5 4" stroke="#4a69b6" fill="none"/></svg>
    </div>
    <div class="app d-flex align-items-center justify-content-center"><svg width="24" height="22" viewBox="0 0 24 22"><rect y="2" width="18" height="20" fill="#292929"/><rect x="6" width="18" height="16" rx="1" fill="#f7f7f7"/><path d="M6 2h12v14H6z" fill="#c4c4c4"/></svg></div>
    <div class="app d-flex align-items-center justify-content-center"><svg width="23" height="21" viewBox="0 0 23 21"><path d="M7 1h7.500c2 0 2.500 2 3 4h-2c-2 0-3 1-3.600 3L9.500 15c-.6 2-1.500 2.500-3 2.500H3.500C.5 17.500 0 15 .8 12L3 4.500C3.800 2 5 1 7 1z" fill="url(#gc1)"/><path d="M16 20H8.500c-2 0-2.500-2-3-3.500h2c2 0 3-1 3.600-3L13.500 6c.6-1.600 1.500-2 3-2h3c3 0 3.500 2.500 2.700 5L20 16.500c-.8 2.500-2 3.500-4 3.500z" fill="url(#gc2)"/><path d="M8 1h6.500c2 0 2.500 2 3 4h-2c-2 0-3 1-3.600 3L11 10.500C9 9 10 3 8 1z" fill="#1658cf"/></svg></div>
    <div class="app run d-flex align-items-center justify-content-center"><svg width="24" height="22" viewBox="0 0 24 22"><path d="M0 1.500Q0 0 1.500 0H8q1 0 2 2l1 1v3H0z" fill="#dc9c12"/><rect y="2.800" width="24" height="18.700" rx="1.200" fill="url(#gf)"/><path d="M0 4.500h8l2-1.700H2z" fill="#dc9c12"/><path d="M4 21.500V17q0-2 2-2h12q2 0 2 2v4.500z" fill="#1580d8"/><path d="M7.500 18.500h9" stroke="#0b4d94" stroke-width="1.500"/></svg></div>
    <div class="app d-flex align-items-center justify-content-center"><svg width="24" height="24" viewBox="0 0 24 24"><circle cx="12" cy="12" r="12" fill="#1572cc"/><path d="M0 11A12 12 0 0 1 24 11.500c.2 4-3 5.500-6 5.500-2.500 0-4-1-3.500-2.300 1.300-1.300 1-5.700-3.500-6.200C6 8 2 8 0 11z" fill="url(#ge)"/><path d="M8.200 14c0-2 1-3.800 3-4.800 3.500.5 4.500 4 3 5.800-.5 1.400 1.300 2.500 3.800 2.500 1.500 0 3-.4 4.200-1.200-1.200 1.700-3.200 3.700-6.700 3.700-4.500 0-7.300-2.700-7.300-6z" fill="#e8dbdb"/><path d="M.2 12C1 8.500 5 7.500 8.500 8.700 5 10.500 4.500 16 8 20c1.500 1.800 3.500 3 5.500 3.900A12 12 0 0 1 .2 12z" fill="#1a93de"/><path d="M9 13c-.5 4 3.500 8 10 6.500l3-1.500c-2 4-6 6-9.500 5.900C6.500 22 5.500 15.500 9 13z" fill="#0c4a9e"/></svg></div>
    <div class="app d-flex align-items-center justify-content-center"><svg width="24" height="24" viewBox="0 0 24 24"><path d="M7.500 5V2.500Q7.500 1 9 1h6q1.500 0 1.500 1.500V5" fill="none" stroke="#2bb8f0" stroke-width="1.700"/><path d="M.500 5h23v15q0 3.500-3.500 3.500H4Q.500 23.500.500 20z" fill="#14508d"/><path d="M7 9h4.300v4.300H7z" fill="#f25022"/><path d="M12.700 9H17v4.300h-4.300z" fill="#7fba00"/><path d="M7 14.700h4.300V19H7z" fill="#00a4ef"/><path d="M12.700 14.700H17V19h-4.300z" fill="#ffb900"/></svg></div>
    <div class="app d-flex align-items-center justify-content-center"><svg width="24" height="22" viewBox="0 0 24 22"><path d="M4 6l9-6 10.500 6v7L14 18H4z" fill="#1a6fc9"/><path d="M13 0l10.500 6-8.500 5-10-5z" fill="#2e96e8"/><path d="M14 12l10-6v13q0 3-3 3H7q-2 0-2-2z" fill="#37c4f7"/><path d="M14 12l10-6v5l-10 7z" fill="#0f4da1"/><rect y="4" width="14.500" height="14.500" rx="1.300" fill="#0f6cbf"/><circle cx="7.200" cy="11.200" r="3.300" fill="none" stroke="#fff" stroke-width="1.900"/></svg></div>
    <div class="app d-flex align-items-center justify-content-center"><span class="sq d-flex align-items-center justify-content-center">Pr</span></div>
    <div class="app d-flex align-items-center justify-content-center"><span class="sq d-flex align-items-center justify-content-center">Me</span></div>
    <div class="app run d-flex align-items-center justify-content-center"><span class="sq ps d-flex align-items-center justify-content-center">Ps</span></div>
    <div class="app d-flex align-items-center justify-content-center"><svg width="21" height="22" viewBox="0 0 21 22"><rect width="21" height="21.500" rx="4" fill="#fff"/><path d="M17.500 7L9.500 11 4 14.500v1.300h11V14l-5-3M17.500 15l-8-4L4 7.500V6.200h11V8l-5 3" fill="none" stroke="#000" stroke-width="1.900"/></svg></div>
    <div class="app d-flex align-items-center justify-content-center"><span class="sq d-flex align-items-center justify-content-center">Ae</span></div>
    <div class="app on d-flex align-items-center justify-content-center"><svg width="24" height="24"><use href="#chrome"/></svg></div>
    <div class="app run d-flex align-items-center justify-content-center"><svg width="24" height="24" viewBox="0 0 24 24"><use href="#chrome" width="24" height="24"/><circle cx="18" cy="6" r="6" fill="#b93a17"/><text x="18" y="9" font-size="8" text-anchor="middle" fill="#f7d9c9">S</text></svg></div>
    <div class="app run d-flex align-items-center justify-content-center"><svg width="22" height="22" viewBox="0 0 22 22"><rect width="22" height="21" rx="4" fill="url(#gcc)"/><path d="M0 11l10 10H4q-4 0-4-4z" fill="#f3c13c"/><path d="M13 0h5q4 0 4 4v4z" fill="#f08a3a"/><g fill="none" stroke="#fff" stroke-width="1.500"><path d="M13.800 14.800H7.500a4.200 4.200 0 0 1 0-8.400c2.700 0 3.700 2.500 5.800 4.800"/><path d="M7.300 10.700a6.300 4.900 0 1 1 6.500 4.100"/><path d="M11 11.200a3.100 3.100 0 1 1 3 .8"/></g></svg></div>
    <div class="app run d-flex align-items-center justify-content-center"><svg width="24" height="24" viewBox="0 0 24 24"><rect width="24" height="24" rx="1.500" fill="#474747"/><path d="M18 4.500v4.300L11 11l7 2v3.700L6 20.300V16l7-2.200-7-2V8z" fill="#ff9800"/></svg></div>
    <div class="d-flex align-items-center ms-auto" style="padding-right:19px">
      <svg width="12" height="8" viewBox="0 0 12 8"><path d="M1 6.500l5-5 5 5" fill="none" stroke="#222" stroke-width="1.400"/></svg>
      <svg width="17" height="12" viewBox="0 0 17 12" style="margin-left:18px"><path d="M4 11.200a3.200 3.200 0 0 1-.6-6.300C4.500.2 11 .2 12.300 4c4.500-.3 5.200 6.500.8 7.200z" fill="#d9d9d9" stroke="#1d1d1d" stroke-width="1.300"/><path d="M3.500 5C5 .8 11 1 12.200 4.200 9 4.500 8 7 3.500 5z" fill="#777"/></svg>
      <svg width="17" height="13" viewBox="0 0 17 13" style="margin-left:15px"><g fill="none" stroke="#222" stroke-width="1.200"><path d="M.8 5a11 11 0 0 1 15.400 0M3 7.300a8 8 0 0 1 11 0M5.200 9.500a4.800 4.800 0 0 1 6.600 0"/></g><circle cx="8.500" cy="11.300" r="1.600" fill="#222"/></svg>
      <svg width="17" height="14" viewBox="0 0 17 14" style="margin-left:7px"><g fill="none" stroke="#222" stroke-width="1.200"><path d="M1 4.800v4.400h2.500L7.300 12.500V1.500L3.500 4.800z"/><path d="M9.500 4.800q1.500 2.200 0 4.400M11.700 3q2.800 4 0 8M14 1.300q4.200 5.700 0 11.400"/></g></svg>
      <svg width="17" height="11" viewBox="0 0 17 11" style="margin-left:7px"><rect x=".7" y=".7" width="13.600" height="9.600" rx="2" fill="none" stroke="#222" stroke-width="1.300"/><rect x="2.500" y="2.500" width="7" height="6" fill="#111"/><path d="M15.500 3.800v3.400" stroke="#222" stroke-width="1.700"/></svg>
      <div class="clk text-end" style="margin-left:16px">01:15<br>18.01.2025</div>
    </div>
  </div>
</div>
</body>
</html>
